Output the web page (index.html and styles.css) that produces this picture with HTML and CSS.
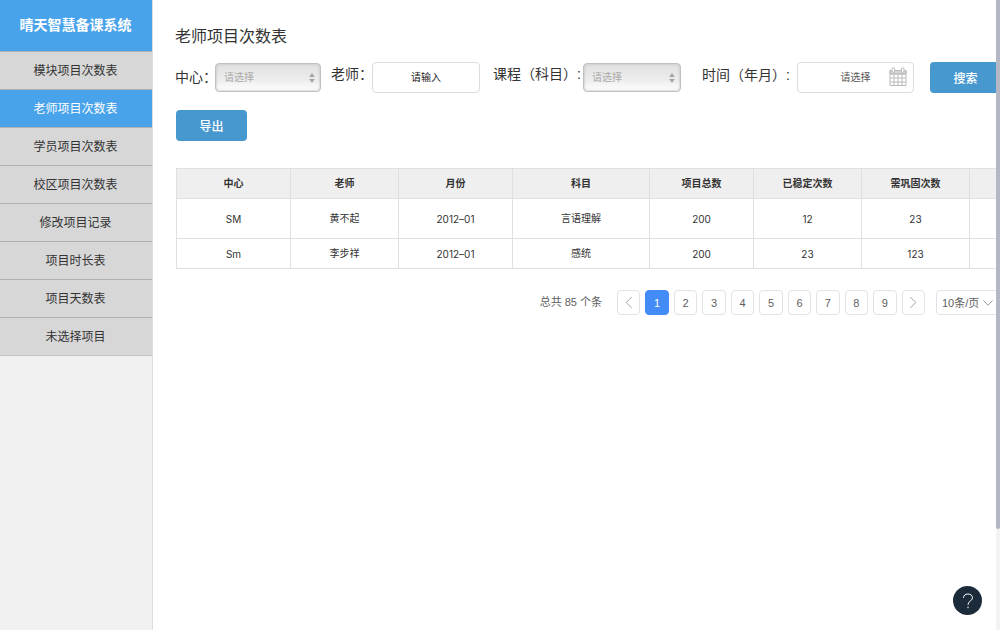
FILE: index.html
```html
<!DOCTYPE html>
<html lang="zh-CN">
<head>
<meta charset="utf-8">
<title>晴天智慧备课系统</title>
<link rel="stylesheet" href="styles.css">
</head>
<body>
<div class="app">
  <aside class="sidebar">
    <div class="brand">晴天智慧备课系统</div>
    <nav class="menu">
      <a href="#">模块项目次数表</a>
      <a href="#" class="active" aria-current="page">老师项目次数表</a>
      <a href="#">学员项目次数表</a>
      <a href="#">校区项目次数表</a>
      <a href="#">修改项目记录</a>
      <a href="#">项目时长表</a>
      <a href="#">项目天数表</a>
      <a href="#">未选择项目</a>
    </nav>
  </aside>

  <main class="main">
    <div class="content">
      <h1 class="title">老师项目次数表</h1>

      <form class="filters">
        <div class="field field-center">
          <label for="center">中心：</label>
          <div class="picker">
            <select id="center"><option>请选择</option></select>
            <svg class="arrows" viewBox="0 0 6 10" aria-hidden="true"><path d="M3 0 5.800 4H0.200zM3 10 0.200 6H5.800z"/></svg>
          </div>
        </div>
        <div class="field field-teacher">
          <label for="teacher">老师：</label>
          <input id="teacher" type="text" placeholder="请输入">
        </div>
        <div class="field field-course">
          <label for="course">课程（科目）:</label>
          <div class="picker">
            <select id="course"><option>请选择</option></select>
            <svg class="arrows" viewBox="0 0 6 10" aria-hidden="true"><path d="M3 0 5.800 4H0.200zM3 10 0.200 6H5.800z"/></svg>
          </div>
        </div>
        <div class="field field-month">
          <label for="month">时间（年月）:</label>
          <div class="picker">
            <input id="month" type="text" placeholder="请选择">
            <svg class="calendar" viewBox="0 0 18 20" aria-hidden="true">
              <path class="cal-head" d="M1 3.500H17V7H1z"/>
              <path d="M1 3.500H17V18.500H1zM1 7H17M1 11H17M1 15H17M5 7V18.500M9 7V18.500M13 7V18.500"/>
              <rect class="ring" x="3" y="0.700" width="2.600" height="4.600" rx="1.300"/>
              <rect class="ring" x="12.400" y="0.700" width="2.600" height="4.600" rx="1.300"/>
            </svg>
          </div>
        </div>
        <button class="btn" type="button">搜索</button>
      </form>

      <button class="btn export" type="button">导出</button>

      <table class="records">
        <colgroup>
          <col class="w-center"><col class="w-teacher"><col class="w-month"><col class="w-subject"><col class="w-total"><col class="w-count"><col class="w-count"><col>
        </colgroup>
        <thead>
          <tr><th>中心</th><th>老师</th><th>月份</th><th>科目</th><th>项目总数</th><th>已稳定次数</th><th>需巩固次数</th><th></th></tr>
        </thead>
        <tbody>
          <tr class="first"><td class="latin">SM</td><td>黄不起</td><td class="latin">2012–01</td><td>言语理解</td><td class="latin">200</td><td class="latin">12</td><td class="latin">23</td><td></td></tr>
          <tr><td class="latin">Sm</td><td>李步祥</td><td class="latin">2012–01</td><td>感统</td><td class="latin">200</td><td class="latin">23</td><td class="latin">123</td><td></td></tr>
        </tbody>
      </table>

      <nav class="pagination" aria-label="分页">
        <span class="count">总共 85 个条</span>
        <div class="pages">
          <button type="button" aria-label="上一页"><svg viewBox="0 0 8 14"><path d="M7 1 1 7l6 6"/></svg></button>
          <button type="button" class="current" aria-current="page">1</button>
          <button type="button">2</button>
          <button type="button">3</button>
          <button type="button">4</button>
          <button type="button">5</button>
          <button type="button">6</button>
          <button type="button">7</button>
          <button type="button">8</button>
          <button type="button">9</button>
          <button type="button" aria-label="下一页"><svg viewBox="0 0 8 14"><path d="M1 1l6 6-6 6"/></svg></button>
        </div>
        <div class="picker page-size">
          <select aria-label="每页条数"><option>10条/页</option></select>
          <svg class="chevron" viewBox="0 0 10 6" aria-hidden="true"><path d="M0.500 0.500 5 5.300 9.500 0.500"/></svg>
        </div>
      </nav>
    </div>
  </main>

  <div class="rail"><div class="thumb"></div></div>
</div>
<button class="help" type="button" aria-label="帮助"><svg viewBox="0 0 12 16" aria-hidden="true"><path d="M1.500 4.800C1.500 2.300 3.500 1 6 1s4.500 1.500 4.500 3.800C10.500 8 6 7.800 6 11.800M6 13.600V15.200"/></svg></button>
</body>
</html>
```
FILE: styles.css
```css
* {
  box-sizing: border-box;
}

body {
  margin: 0;
  background: #fff;
  color: #333;
  font-family: "Liberation Sans", "Noto Sans CJK SC", sans-serif;
  font-size: 11px;
}

button,
input,
select {
  margin: 0;
  font: inherit;
  color: inherit;
}

.app {
  display: flex;
  height: 100vh;
}

.sidebar {
  flex: 0 0 153px;
  padding-right: 1px;
  border-right: 1px solid #dedede;
  background: #f1f1f1;
  text-align: center;
}

.brand,
.menu a {
  margin-right: -1px;
  padding-right: 1px;
}

.brand {
  height: 51px;
  background: #49a3ea;
  color: #fff;
  font-size: 14px;
  font-weight: 700;
  line-height: 51px;
}

.menu a {
  display: block;
  height: 38px;
  border-top: 1px solid #b0b0b0;
  background: #d7d7d7;
  color: #333;
  font-size: 12px;
  line-height: 38px;
  text-decoration: none;
}

.menu a:last-child {
  height: 39px;
  border-bottom: 1px solid #c4c4c4;
}

.menu .active {
  background: #49a3ea;
  color: #fff;
}

.main {
  flex: 1;
  min-width: 0;
  overflow: hidden;
}

.content {
  min-width: 848px;
  padding: 25px 0 24px 22px;
}

.title {
  margin: 0 0 12px;
  font-size: 16px;
  font-weight: 400;
  line-height: 24px;
}

.filters {
  display: flex;
  align-items: center;
  height: 32px;
}

.field {
  display: flex;
  align-items: center;
}

.field label {
  flex: none;
  font-size: 14px;
  line-height: 20px;
  white-space: nowrap;
}

.field-center label {
  width: 40px;
}

.field-teacher label {
  width: 41px;
  padding-bottom: 6px;
}

.field-course label {
  width: 90px;
  padding-bottom: 6px;
}

.field-month label {
  width: 95px;
  padding-bottom: 4px;
}

.field-center {
  margin-right: 10px;
}

.field-teacher {
  margin-right: 13px;
}

.field-course {
  margin-right: 21px;
}

.field-month {
  margin-right: 16px;
}

.picker {
  position: relative;
}

.picker select {
  appearance: none;
  display: block;
  outline: none;
}

.field select {
  width: 106px;
  height: 29px;
  padding: 0 8px;
  border: 1px solid #c0c0c0;
  border-radius: 4px;
  background: linear-gradient(#e0e0e0, #ededed 60%, #fff);
  box-shadow: inset 0 0 3px #bbb;
  color: #aaa;
  font-size: 10px;
}

.field-course select {
  width: 98px;
}

.arrows {
  position: absolute;
  top: 10px;
  right: 6px;
  width: 6px;
  height: 10px;
  fill: #a4a4a4;
  pointer-events: none;
}

.field input {
  display: block;
  width: 108px;
  height: 31px;
  padding: 0 8px;
  border: 1px solid #dcdcdc;
  border-radius: 4px;
  background: #fff;
  font-size: 10px;
  text-align: center;
}

.field-month input {
  width: 117px;
}

.field input::placeholder {
  color: #222;
  opacity: 1;
}

.field-month input::placeholder {
  color: #555;
}

.calendar {
  position: absolute;
  top: 5px;
  right: 7px;
  width: 18px;
  height: 20px;
  fill: none;
  stroke: #bbb;
  pointer-events: none;
}

.calendar .cal-head {
  fill: #d4d4d4;
}

.calendar .ring {
  fill: #fff;
}

.btn {
  flex: none;
  width: 71px;
  height: 31px;
  padding: 0;
  border: 0;
  border-radius: 4px;
  background: #4898d0;
  color: #fff;
  font-size: 12px;
  font-weight: 500;
}

.export {
  display: block;
  margin: 17px 0 27px 1px;
}

.records {
  width: 100%;
  margin-left: 1px;
  border-collapse: collapse;
  table-layout: fixed;
  text-align: center;
}

.records th,
.records td {
  height: 30px;
  padding: 0;
  border: 1px solid #e0e0e0;
  line-height: 16px;
}

.records th {
  background: #efefef;
  font-size: 10px;
  font-weight: 700;
}

.records .first td {
  height: 40px;
}

.records td {
  font-size: 10px;
}

.records .latin {
  font-family: Inter, sans-serif;
}

.w-center,
.w-month {
  width: 114px;
}

.w-teacher,
.w-count {
  width: 108px;
}

.w-subject {
  width: 137px;
}

.w-total {
  width: 104px;
}

.pagination {
  display: flex;
  align-items: center;
  justify-content: flex-end;
  margin-top: 21px;
  color: #606060;
}

.count {
  margin-right: 15px;
  padding-bottom: 3px;
}

.pages {
  display: grid;
  grid-template-columns: repeat(11, 1fr);
  gap: 5px;
  width: 308px;
  margin-right: 11px;
}

.pages button {
  display: flex;
  align-items: center;
  justify-content: center;
  height: 25px;
  padding: 0;
  border: 1px solid #e2e2e2;
  border-radius: 4px;
  background: #fff;
}

.pages .current {
  border-color: #438cf7;
  background: #438cf7;
  color: #fff;
}

.pages svg {
  width: 8px;
  height: 13px;
  fill: none;
  stroke: #999;
}

.page-size select {
  width: 65px;
  height: 25px;
  padding: 0 5px;
  border: 1px solid #e2e2e2;
  border-radius: 4px;
  background: #fff;
}

.chevron {
  position: absolute;
  top: 10px;
  right: 8px;
  width: 10px;
  height: 6px;
  fill: none;
  stroke: #999;
  pointer-events: none;
}

.rail {
  flex: 0 0 4px;
  background: #f3f3f3;
}

.thumb {
  height: 84%;
  border-radius: 0 0 2px 2px;
  background: #b3b8c4;
}

.help {
  position: fixed;
  right: 18px;
  bottom: 15px;
  display: flex;
  align-items: center;
  justify-content: center;
  width: 29px;
  height: 29px;
  padding: 0;
  border: 0;
  border-radius: 50%;
  background: #1c2b39;
}

.help svg {
  width: 12px;
  height: 16px;
  fill: none;
  stroke: #fff;
}
```
